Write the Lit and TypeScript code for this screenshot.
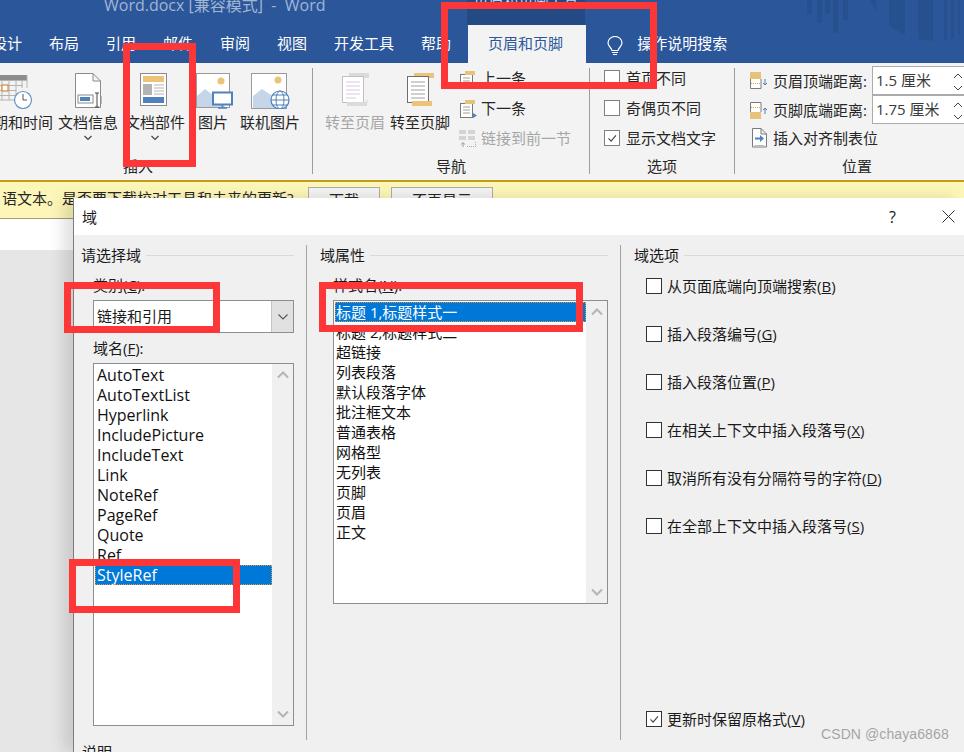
import { LitElement, html, css, svg } from "lit";
import { customElement } from "lit/decorators.js";

const chk = svg`<path d="M4 8.5l3 3 5.5-6.5" fill="none" stroke="#444" stroke-width="1.3"/>`;

const icons = {
  calendar: html`<svg width="40" height="38" viewBox="0 0 40 38">
    <rect x="0" y="4" width="31" height="5" fill="#8c8c8c"/>
    <path d="M0 9.5H31M0 14.5H27M0 19.5H20M0 24.5H20M0 29H20M6 9V29M13 9V29M20 9V25M26 9V17M31 4V17" stroke="#b4b4b4" fill="#fff"/>
    <rect x="6" y="14" width="6" height="6" fill="#fff" stroke="#d98a3a" stroke-width="1.2"/>
    <circle cx="27" cy="29" r="8.5" fill="#fff" stroke="#5f94c8" stroke-width="1.2"/>
    <path d="M27 23v6h4" fill="none" stroke="#555"/></svg>`,
  docinfo: html`<svg width="38" height="38" viewBox="0 0 38 38">
    <path d="M6.5 2.5H24L31.5 10V36.5H6.5Z M24 2.5V10H31.5" fill="#fff" stroke="#8a8a8a"/>
    <rect x="9" y="24" width="15" height="8" fill="#fff" stroke="#8a8a8a"/>
    <rect x="11" y="26" width="10" height="4" fill="#4f81bd"/>
    <path d="M26 22h4M26 36h4M28 22v14" stroke="#444" fill="none"/>
    <path d="M32 25v8" stroke="#8a8a8a"/></svg>`,
  parts: html`<svg width="38" height="38" viewBox="0 0 38 38">
    <rect x="4.5" y="2.5" width="26" height="32" fill="#fff" stroke="#8a8a8a"/>
    <rect x="7" y="5" width="21" height="6" fill="#edc37a"/>
    <rect x="7" y="13" width="9" height="11" fill="#b3b3b3"/>
    <path d="M18 14h10M18 17h10M18 20h10M18 23h10" stroke="#b3b3b3"/>
    <rect x="7" y="26" width="21" height="6" fill="#4f81bd"/></svg>`,
  picture: html`<svg width="42" height="38" viewBox="0 0 42 38">
    <rect x="4.5" y="2.5" width="33" height="34" fill="#fff" stroke="#9a9a9a"/>
    <path d="M5 36V25L13 18L21 24L25 22L33 36Z" fill="#c5d6e8"/>
    <circle cx="29" cy="10" r="3.5" fill="#edc37a"/>
    <rect x="21" y="21.500" width="19" height="12" fill="#fff" stroke="#4f81bd" stroke-width="2"/>
    <path d="M30.500 34v2.500M26 37h9" stroke="#4f81bd" stroke-width="1.500"/></svg>`,
  online: html`<svg width="42" height="38" viewBox="0 0 42 38">
    <rect x="2.500" y="2.500" width="35" height="35" fill="#fff" stroke="#9a9a9a"/>
    <path d="M4 37V25L13 18L22 24L26 22L33 37Z" fill="#c5d6e8"/>
    <circle cx="29" cy="9" r="3.500" fill="#edc37a"/>
    <circle cx="31" cy="29" r="9" fill="#fff" stroke="#4f81bd" stroke-width="1.200"/>
    <ellipse cx="31" cy="29" rx="4" ry="9" fill="none" stroke="#4f81bd"/>
    <path d="M22 29h18M23.500 24h15M23.500 34h15" stroke="#4f81bd"/></svg>`,
  gotoHead: html`<svg width="38" height="38" viewBox="0 0 38 38">
    <rect x="13" y="2" width="20" height="5" fill="#dcdadc"/>
    <rect x="6.500" y="5.500" width="21" height="26" fill="#fff" stroke="#c4bcc6"/>
    <path d="M10 11h14M10 15h14M10 19h14M10 23h14M10 27h10" stroke="#d8c9dc"/>
    <path d="M26 32h5v-3" stroke="#d4d4d4" fill="none"/>
    <rect x="11" y="31" width="20" height="4" fill="#dcdadc"/></svg>`,
  gotoFoot: html`<svg width="38" height="38" viewBox="0 0 38 38">
    <rect x="13" y="2" width="20" height="5" fill="#edc37a"/>
    <rect x="6.500" y="5.500" width="21" height="26" fill="#fff" stroke="#6e6e6e"/>
    <path d="M10 11h14M10 15h14M10 19h14M10 23h14M10 27h14" stroke="#a0a0a0"/>
    <rect x="11" y="30" width="20" height="5" fill="#edc37a"/></svg>`,
  prev: html`<svg width="20" height="20" viewBox="0 0 20 20">
    <rect x="2.500" y="6.500" width="12" height="14" fill="#fff" stroke="#7a7a7a"/>
    <path d="M5 10h7M5 13h7M5 16h7" stroke="#a0a0a0"/>
    <rect x="7" y="3" width="10" height="4" fill="#e8c27a"/></svg>`,
  next: html`<svg width="20" height="20" viewBox="0 0 20 20">
    <rect x="2.500" y="5.500" width="12" height="14" fill="#fff" stroke="#7a7a7a"/>
    <path d="M5 9h7M5 12h7M5 15h7" stroke="#a0a0a0"/>
    <rect x="7" y="2" width="10" height="4" fill="#e8c27a"/>
    <path d="M15 15l4 2.500-4 2.500Z" fill="#4f81bd"/></svg>`,
  link: html`<svg width="20" height="20" viewBox="0 0 20 20">
    <path d="M1 2h7v4H1ZM10 2h7v4h-7ZM1 8h7v4H1ZM10 8h7v4h-7Z" fill="#d4d4d4"/>
    <path d="M5 19v-4M3 16.500l2-2 2 2" stroke="#999" fill="none"/>
    <path d="M9 18.500h9M17.500 14v5" stroke="#aaa" stroke-dasharray="1 1" fill="none"/></svg>`,
  top: html`<svg width="18" height="20" viewBox="0 0 18 20">
    <rect x="0" y="1" width="11" height="7" fill="#e8c27a"/>
    <path d="M.5 8v9.500h10.500V8" fill="#fff" stroke="#7a7a7a"/>
    <path d="M1 12.500h9" stroke="#e8a33a" stroke-dasharray="1 1"/>
    <path d="M15 8v6M13 12l2 2 2-2" stroke="#4f81bd" fill="none"/></svg>`,
  bottom: html`<svg width="18" height="20" viewBox="0 0 18 20">
    <path d="M.5 12V2.500h10.500V12" fill="#fff" stroke="#7a7a7a"/>
    <path d="M1 7.500h9" stroke="#e8a33a" stroke-dasharray="1 1"/>
    <rect x="0" y="12" width="11" height="7" fill="#e8c27a"/>
    <path d="M15 14V8M13 10l2-2 2 2" stroke="#4f81bd" fill="none"/></svg>`,
  align: html`<svg width="18" height="21" viewBox="0 0 18 21">
    <path d="M2.500 1.500H11L16.500 7V20H2.500Z M11 1.500V7H16.500" fill="#fff" stroke="#7a7a7a"/>
    <path d="M4.500 18.500H14.500" stroke="#bbb"/>
    <path d="M5 11.500h6" stroke="#4f81bd" stroke-width="2"/>
    <path d="M10 8l4 3.500-4 3.500Z" fill="#4f81bd"/></svg>`,
};

const optionRows = [
  ["从页面底端向顶端搜索(", "B", ")"],
  ["插入段落编号(", "G", ")"],
  ["插入段落位置(", "P", ")"],
  ["在相关上下文中插入段落号(", "X", ")"],
  ["取消所有没有分隔符号的字符(", "D", ")"],
  ["在全部上下文中插入段落号(", "S", ")"],
];
const fieldNames = ["AutoText", "AutoTextList", "Hyperlink", "IncludePicture", "IncludeText", "Link", "NoteRef", "PageRef", "Quote", "Ref", "StyleRef"];
const styleNames = ["标题 1,标题样式一", "标题 2,标题样式二", "超链接", "列表段落", "默认段落字体", "批注框文本", "普通表格", "网格型", "无列表", "页脚", "页眉", "正文"];
const tabs = ["设计", "布局", "引用", "邮件", "审阅", "视图", "开发工具", "帮助"];

@customElement("app-root")
export class AppRoot extends LitElement {
  static styles = css`
    :host {
      display: block;
      position: relative;
      width: 964px;
      height: 752px;
      overflow: hidden;
      background: #e6e6e6;
      font: 15px/20px "Open Sans", "Noto Sans CJK SC", sans-serif;
      color: #262626;
    }
    .head { position: relative; height: 63px; background: #2b579a; overflow: hidden; }
    .decor { position: absolute; left: 0; top: 0; }
    .title-row { display: flex; height: 25px; position: relative; }
    .doc-title { margin-left: 104px; width: 363px; font-size: 16px; line-height: 10px; color: #a2b5d3; white-space: pre; }
    .context { width: 118px; background: #234a82; color: #c9d5e8; text-align: center; line-height: 2px; }
    .tabs { display: flex; height: 35px; padding-bottom: 3px; align-items: center; gap: 27px; margin-left: -8px; color: #fff; position: relative; }
    .tab-active {
      align-self: stretch; display: flex; align-items: center; justify-content: center;
      width: 118px; box-sizing: border-box; margin: 0 0 -3px -10px; padding: 0 3px 3px 0; background: #f3f3f3; color: #2b579a;
    }
    .bulb { display: flex; margin: 6px 0 0 -6px; }
    .search { margin-left: -13px; color: #fff; }

    .ribbon { display: flex; height: 117px; background: #f3f3f3; overflow: hidden; }
    .group { display: flex; flex-direction: column; flex: none; }
    .g1 { width: 312px; }
    .g2 { width: 276px; }
    .g3 { width: 144px; }
    .g4 { width: 229px; }
    .content { flex: 1; display: flex; min-height: 0; }
    .g1 .content { margin-left: -22px; padding-top: 8px; gap: 5px; }
    .g2 .content { padding-left: 12px; padding-top: 8px; gap: 5px; }
    .glabel { height: 20px; margin-bottom: 4px; text-align: center; flex: none; }
    .g1 .glabel { padding-right: 36px; }
    .g4 .glabel { padding-left: 15px; }
    .sep { width: 1px; margin: 5px 0 6px; background: #9c9c9c; flex: none; }
    .big { display: flex; flex-direction: column; align-items: center; flex: none; white-space: nowrap; }
    .big svg { display: block; }
    .w60 { width: 60px; }
    .w75 { width: 75px; }
    .w30 { width: 30px; }
    .mt3 { margin-left: 2px; }
    .mp { margin-left: 8px; }
    .mo { margin-left: 7px; }
    .cap { height: 20px; margin-top: 3px; }
    .chev { margin-top: 2px; }
    .dim { color: #a6a6a6; }
    .small-col { display: flex; flex-direction: column; margin-left: 3px; margin-top: -8px; }
    .small { display: flex; align-items: center; gap: 3px; height: 30px; white-space: nowrap; }
    .g3 .content { flex-direction: column; padding-left: 14px; }
    .rcheck { display: flex; align-items: center; gap: 6px; height: 30px; white-space: nowrap; }
    .rbox { width: 16px; height: 16px; box-sizing: border-box; border: 1px solid #7f7f7f; background: #fff; display: block; }
    .g4 .content { flex-direction: column; padding: 3px 0 0 15px; }
    .prow { display: flex; align-items: center; height: 29px; white-space: nowrap; }
    .prow:last-child { margin-top: -1px; }
    .prow svg { flex: none; margin-right: 5px; }
    .plabel { width: 95px; margin-right: 5px; }
    .spin {
      width: 100px; height: 29px; box-sizing: border-box; border: 1px solid #ababab; background: #fff;
      padding: 3px 0 0 3px; position: relative; display: flex; flex: none; color: #3a3a3a;
    }
    .spin-arrows { position: absolute; left: 80px; top: 5px; }

    .msg {
      height: 39px; box-sizing: border-box; border-top: 2px solid #c29d1a;
      background: #fcf6b8; display: flex; align-items: flex-start; padding: 7px 0 0 2px; white-space: nowrap;
      border-bottom: 1px solid #a09b78;
    }
    .msg-text { width: 306px; margin-top: -1px; }
    .msg-btn { box-sizing: border-box; height: 26px; border: 1px solid #adadad; background: #f3f3f3; text-align: center; margin-top: -2px; padding-top: 2px; }
    .b1 { width: 72px; margin-right: 11px; }
    .b2 { width: 102px; }
    .white { height: 31px; background: #fff; }

    .dialog {
      position: absolute; left: 73px; top: 198px; right: 0; bottom: 0;
      background: #f0f0f0; border-left: 1px solid #7d7d7d; overflow: hidden;
      box-shadow: -10px 0 14px rgba(0, 0, 0, .12); color: #1a1a1a; display: flex; flex-direction: column;
    }
    .dlg-title { height: 37px; background: #fff; display: flex; align-items: center; padding: 0 0 0 8px; flex: none; }
    .dlg-title .t { flex: 1; }
    .q { margin-right: 46px; font-size: 16px; }
    .x { margin-right: 9px; display: block; }
    .cols { display: flex; padding-top: 10px; flex: none; }
    .col { height: 495px; box-sizing: border-box; flex: none; }
    .c1 { width: 233px; border-right: 1px solid #a3a3a3; }
    .c2 { width: 314px; border-right: 1px solid #a3a3a3; padding-left: 13px; }
    .c3 { flex: 1; padding-left: 13px; display: flex; flex-direction: column; padding-bottom: 11px; }
    .ghead { display: flex; align-items: center; height: 20px; gap: 5px; }
    .ghead i { flex: 1; height: 1px; background: #d9d9d9; display: block; }
    .c1 .ghead { margin-left: 7px; margin-right: 12px; }
    .c2 .ghead { margin-right: 12px; }
    .flabel { height: 20px; margin-bottom: 5px; }
    .c1 .flabel { margin-left: 19px; }
    .c2 .flabel { margin-left: 13px; }
    .f1 { margin-top: 10px; }
    .combo {
      margin: 0 12px 5px 19px; height: 33px; box-sizing: border-box; border: 1px solid #8a8f95; background: #fff;
      display: flex; align-items: center; padding-left: 3px;
    }
    .combo span { flex: 1; padding-bottom: 2px; }
    .combo-btn { width: 21px; align-self: stretch; background: #e1e1e1; display: flex; align-items: center; justify-content: center; border-left: 1px solid #c4c4c4; }
    .list { box-sizing: border-box; border: 1px solid #8a8f95; background: #fff; display: flex; }
    .l1 { margin: 0 12px 0 19px; height: 363px; }
    .l2 { margin: 0 12px 0 13px; height: 304px; }
    .items { flex: 1; padding: 1px 0 0 1px; min-width: 0; }
    .item { height: 20px; padding-left: 2px; white-space: pre; color: #111; }
    .l1 .item { font-size: 16px; }
    .l2 .item { padding-left: 1px; }
    .item.sel { background: #0078d7; color: #fff; outline: 1px dotted #d89a4a; outline-offset: -1px; }
    .sb { width: 21px; background: #f0f0f0; display: flex; flex-direction: column; justify-content: space-between; align-items: center; padding: 7px 0; flex: none; }
    .sb svg { display: block; }
    .opt { display: flex; align-items: center; gap: 5px; height: 20px; margin-left: 12px; margin-bottom: 28px; white-space: nowrap; }
    .optfirst { margin-top: 11px; }
    .optlast { margin-top: auto; margin-bottom: 0; }
    .dbox { width: 16px; height: 16px; box-sizing: border-box; border: 1px solid #333; background: #fff; display: block; flex: none; }
    .explain { padding-left: 8px; height: 20px; margin-top: 2px; }

    .mark { position: absolute; box-sizing: border-box; border: 7px solid #fd3737; }
    .m1 { left: 123px; top: 43px; width: 73px; height: 124px; }
    .m2 { left: 441px; top: 2px; width: 216px; height: 87px; }
    .m3 { left: 64px; top: 282px; width: 156px; height: 51px; }
    .m4 { left: 319px; top: 282px; width: 264px; height: 50px; }
    .m5 { left: 69px; top: 559px; width: 171px; height: 54px; }
    .wm { position: absolute; left: 821px; top: 724px; font: 14px/20px "Liberation Sans", sans-serif; color: rgba(110, 110, 110, .6); letter-spacing: .1px; white-space: nowrap; }
  `;

  private chevron() {
    return html`<svg class="chev" width="10" height="8" viewBox="0 0 10 8"><path d="M1.500 2l3.500 3.500L8.500 2" fill="none" stroke="#444" stroke-width="1.200"/></svg>`;
  }

  private sbArrow(d: string) {
    return html`<svg width="12" height="8" viewBox="0 0 12 8"><path d="${d}" fill="none" stroke="#b4b4b4" stroke-width="2"/></svg>`;
  }

  private spinArrows() {
    return html`<svg class="spin-arrows" width="12" height="20" viewBox="0 0 12 20"><path d="M1 6l4-4 4 4M1 14l4 4 4-4" fill="none" stroke="#444"/></svg>`;
  }

  render() {
    return html`
      <div class="head">
        <svg class="decor" width="964" height="63" viewBox="0 0 964 63">
          <g fill="#27508e">
            <rect x="807" y="0" width="5" height="14"/><rect x="817" y="0" width="5" height="23"/>
            <rect x="825" y="0" width="5" height="14"/><rect x="833" y="0" width="5" height="33"/>
            <rect x="843" y="0" width="5" height="20"/>
            <path d="M870 0h6v12ZM889 0h16v35l-16-9ZM918 0h15v41l-15-2ZM944 0h3v40h-3ZM951 0h3v38h-3ZM958 0h2v35h-2Z"/>
          </g>
        </svg>
        <div class="title-row">
          <div class="doc-title">Word.docx [兼容模式]  -  Word</div>
          <div class="context">页眉和页脚工具</div>
        </div>
        <div class="tabs">
          ${tabs.map((t) => html`<span>${t}</span>`)}
          <div class="tab-active">页眉和页脚</div>
          <span class="bulb"><svg width="16" height="20" viewBox="0 0 16 20"><path d="M5 14.500C4.500 11.500 1 10.500 1 6.800A7 6.300 0 0 1 15 6.800C15 10.500 11.500 11.500 11 14.500Z" fill="none" stroke="#fff" stroke-width="1.200"/><path d="M5 16.500h6M6 18.500h4" stroke="#fff" stroke-width="1.200"/></svg></span>
          <span class="search">操作说明搜索</span>
        </div>
      </div>

      <div class="ribbon">
        <div class="group g1">
          <div class="content">
            <div class="big w75">${icons.calendar}<div class="cap">日期和时间</div></div>
            <div class="big w60">${icons.docinfo}<div class="cap">文档信息</div>${this.chevron()}</div>
            <div class="big w60 mt3">${icons.parts}<div class="cap">文档部件</div>${this.chevron()}</div>
            <div class="big w30 mp">${icons.picture}<div class="cap">图片</div></div>
            <div class="big w60 mo">${icons.online}<div class="cap">联机图片</div></div>
          </div>
          <div class="glabel">插入</div>
        </div>
        <div class="sep"></div>
        <div class="group g2">
          <div class="content">
            <div class="big w60">${icons.gotoHead}<div class="cap dim">转至页眉</div></div>
            <div class="big w60">${icons.gotoFoot}<div class="cap">转至页脚</div></div>
            <div class="small-col">
              <div class="small">${icons.prev}<span>上一条</span></div>
              <div class="small">${icons.next}<span>下一条</span></div>
              <div class="small">${icons.link}<span class="dim">链接到前一节</span></div>
            </div>
          </div>
          <div class="glabel">导航</div>
        </div>
        <div class="sep"></div>
        <div class="group g3">
          <div class="content">
            <div class="rcheck"><span class="rbox"></span>首页不同</div>
            <div class="rcheck"><span class="rbox"></span>奇偶页不同</div>
            <div class="rcheck"><svg class="rbox" viewBox="0 0 16 16" width="16" height="16">${chk}</svg>显示文档文字</div>
          </div>
          <div class="glabel">选项</div>
        </div>
        <div class="sep"></div>
        <div class="group g4">
          <div class="content">
            <div class="prow">${icons.top}<span class="plabel">页眉顶端距离:</span><div class="spin">1.5 厘米${this.spinArrows()}</div></div>
            <div class="prow">${icons.bottom}<span class="plabel">页脚底端距离:</span><div class="spin">1.75 厘米${this.spinArrows()}</div></div>
            <div class="prow">${icons.align}<span>插入对齐制表位</span></div>
          </div>
          <div class="glabel">位置</div>
        </div>
      </div>

      <div class="msg">
        <div class="msg-text">语文本。是否要下载校对工具和未来的更新?</div>
        <div class="msg-btn b1">下载</div>
        <div class="msg-btn b2">不再显示</div>
      </div>
      <div class="white"></div>

      <div class="dialog">
        <div class="dlg-title">
          <span class="t">域</span>
          <span class="q">?</span>
          <svg class="x" width="13" height="13" viewBox="0 0 13 13"><path d="M.5 .5l12 12M12.500 .5l-12 12" stroke="#333" fill="none"/></svg>
        </div>
        <div class="cols">
          <div class="col c1">
            <div class="ghead"><span>请选择域</span><i></i></div>
            <div class="flabel f1">类别(<u>C</u>):</div>
            <div class="combo"><span>链接和引用</span><div class="combo-btn"><svg width="12" height="8" viewBox="0 0 12 8"><path d="M1.500 1.500L6 6l4.500-4.500" fill="none" stroke="#555" stroke-width="1.100"/></svg></div></div>
            <div class="flabel">域名(<u>F</u>):</div>
            <div class="list l1">
              <div class="items">
                ${fieldNames.map((n) => html`<div class="item ${n === "StyleRef" ? "sel" : ""}">${n}</div>`)}
              </div>
              <div class="sb">${this.sbArrow("M1 6.500l5-5 5 5")}${this.sbArrow("M1 1.500l5 5 5-5")}</div>
            </div>
          </div>
          <div class="col c2">
            <div class="ghead"><span>域属性</span><i></i></div>
            <div class="flabel f1">样式名(<u>N</u>):</div>
            <div class="list l2">
              <div class="items">
                ${styleNames.map((n, i) => html`<div class="item ${i === 0 ? "sel" : ""}">${n}</div>`)}
              </div>
              <div class="sb">${this.sbArrow("M1 6.500l5-5 5 5")}${this.sbArrow("M1 1.500l5 5 5-5")}</div>
            </div>
          </div>
          <div class="col c3">
            <div class="ghead"><span>域选项</span><i></i></div>
            ${optionRows.map((r, i) => html`<div class="opt ${i === 0 ? "optfirst" : ""}"><span class="dbox"></span><span>${r[0]}<u>${r[1]}</u>${r[2]}</span></div>`)}
            <div class="opt optlast"><svg class="dbox" width="16" height="16" viewBox="0 0 16 16">${chk}</svg><span>更新时保留原格式(<u>V</u>)</span></div>
          </div>
        </div>
        <div class="explain">说明</div>
      </div>

      <div class="mark m1"></div>
      <div class="mark m2"></div>
      <div class="mark m3"></div>
      <div class="mark m4"></div>
      <div class="mark m5"></div>
      <div class="wm">CSDN @chaya6868</div>
    `;
  }
}
